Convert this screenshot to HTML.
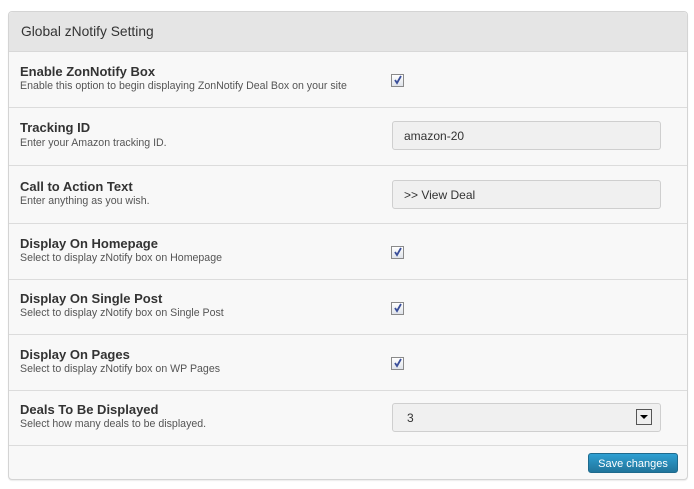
<!DOCTYPE html>
<html><head><style>
body{margin:0;width:694px;height:489px;background:#fff;font-family:"Liberation Sans",Arial,sans-serif;position:relative;overflow:hidden}
.panel{position:absolute;left:8px;top:11px;width:678px;height:467px;border:1px solid #d4d4d4;border-radius:4px;background:#f8f8f8;box-shadow:0 1px 1px rgba(0,0,0,.08)}
.hd{position:absolute;left:0;top:0;right:0;height:39px;background:#e5e5e5;border-bottom:1px solid #d8d8d8;border-radius:4px 4px 0 0;font-size:13.8px;color:#333;line-height:39px;padding-left:12px}
.ln{position:absolute;left:0;right:0;height:1px;background:#dcdcdc}
.lb{position:absolute;left:11px;font-size:13px;font-weight:bold;color:#333}
.ds{position:absolute;left:11px;font-size:10.6px;color:#555}
.cb{position:absolute;left:382px;width:11px;height:11px;border:1px solid #8a8a8a;background:linear-gradient(#fff,#dfe3ea)}
.cb svg{position:absolute;left:1px;top:0}
.in{position:absolute;left:383px;width:269px;height:29px;border:1px solid #cfcfcf;border-radius:3px;background:#f0f0f0;font-size:12px;color:#333;line-height:29px;padding-left:0;box-sizing:border-box}
.btn{position:absolute;left:579px;top:441px;width:90px;height:20px;background:linear-gradient(#2e9fd2,#21759b);border:1px solid #1e6a8d;border-radius:3px;color:#fff;font-size:11px;line-height:20px;text-align:center;box-sizing:border-box}
</style></head><body>
<div class="panel">
<div class="hd">Global zNotify Setting</div>
<div class="lb" style="top:52px">Enable ZonNotify Box</div>
<div class="ds" style="top:68px">Enable this option to begin displaying ZonNotify Deal Box on your site</div>
<div class="cb" style="top:62px"><svg width="10" height="10" viewBox="0 0 10 10"><path d="M2 5 L4 8 L8 1" stroke="#3b4f9a" stroke-width="1.8" fill="none"/></svg></div>
<div class="ln" style="top:95px"></div>
<div class="lb" style="top:108px">Tracking ID</div>
<div class="ds" style="top:125px">Enter your Amazon tracking ID.</div>
<div class="in" style="top:109px;padding-left:11px">amazon-20</div>
<div class="ln" style="top:153px"></div>
<div class="lb" style="top:167px">Call to Action Text</div>
<div class="ds" style="top:183px">Enter anything as you wish.</div>
<div class="in" style="top:168px;padding-left:11px">&gt;&gt; View Deal</div>
<div class="ln" style="top:211px"></div>
<div class="lb" style="top:224px">Display On Homepage</div>
<div class="ds" style="top:240px">Select to display zNotify box on Homepage</div>
<div class="cb" style="top:234px"><svg width="10" height="10" viewBox="0 0 10 10"><path d="M2 5 L4 8 L8 1" stroke="#3b4f9a" stroke-width="1.8" fill="none"/></svg></div>
<div class="ln" style="top:267px"></div>
<div class="lb" style="top:279px">Display On Single Post</div>
<div class="ds" style="top:295px">Select to display zNotify box on Single Post</div>
<div class="cb" style="top:290px"><svg width="10" height="10" viewBox="0 0 10 10"><path d="M2 5 L4 8 L8 1" stroke="#3b4f9a" stroke-width="1.8" fill="none"/></svg></div>
<div class="ln" style="top:322px"></div>
<div class="lb" style="top:335px">Display On Pages</div>
<div class="ds" style="top:351px">Select to display zNotify box on WP Pages</div>
<div class="cb" style="top:345px"><svg width="10" height="10" viewBox="0 0 10 10"><path d="M2 5 L4 8 L8 1" stroke="#3b4f9a" stroke-width="1.8" fill="none"/></svg></div>
<div class="ln" style="top:378px"></div>
<div class="lb" style="top:390px">Deals To Be Displayed</div>
<div class="ds" style="top:406px">Select how many deals to be displayed.</div>
<div class="in" style="top:391px;padding-left:14px">3
<div style="position:absolute;left:243px;top:5px;width:14px;height:14px;border:1px solid #555;background:#eee"><div style="position:absolute;left:3px;top:5px;width:0;height:0;border-left:4px solid transparent;border-right:4px solid transparent;border-top:4px solid #000"></div></div></div>
<div class="ln" style="top:433px"></div>
<div class="btn">Save changes</div>
</div>
</body></html>
